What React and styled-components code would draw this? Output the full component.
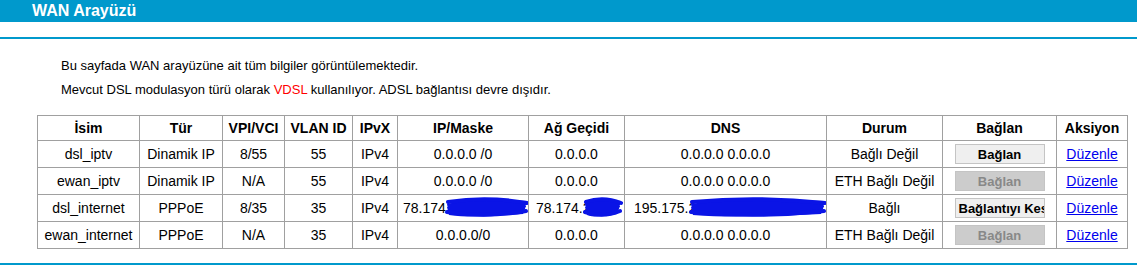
import styled, { createGlobalStyle } from 'styled-components'

const GlobalStyle = createGlobalStyle`
    body {
        margin: 0;
        background: #fff;
        font-family: "Liberation Sans", Arial, sans-serif;
        color: #000;
    }
`

const Page = styled.div`
    width: 1137px;
`

const TitleBar = styled.div`
    height: 22px;
    background: #0099cc;
    padding-left: 32px;
    display: flex;
    align-items: center;

    h1 {
        margin: 0;
        font-size: 16px;
        font-weight: bold;
        color: #fff;
    }
`

const Rule = styled.div`
    height: 2px;
    background: #0099cc;
    margin-top: ${p => p.$top}px;
`

const Intro = styled.div`
    padding-left: 61px;
    margin-top: 15px;
    font-size: 13px;
    line-height: 24px;

    p {
        margin: 0;
    }

    .red {
        color: #ff0000;
    }
`

const Table = styled.table`
    margin: 13px 0 0 37px;
    width: 1091px;
    border-collapse: collapse;
    table-layout: fixed;
    font-size: 14px;

    th, td {
        border: 1px solid #a0a0a0;
        text-align: center;
        padding: 0;
        white-space: nowrap;
    }

    th {
        height: 24px;
        font-weight: bold;
    }

    td {
        height: 26px;
    }
`

const MaskedCell = styled.td`
    position: relative;
    overflow: hidden;
    && {
        text-align: left;
        padding-left: ${p => p.$pad}px;
    }
`

const Scribble = styled.svg`
    position: absolute;
    top: 1px;
    left: ${p => p.$left}px;
`

const Button = styled.button`
    width: 90px;
    height: 20px;
    padding: 0 3px;
    border: 1px solid #c4c4c4;
    background: ${p => (p.disabled ? '#cccccc' : '#efefef')};
    color: ${p => (p.disabled ? '#888' : '#000')};
    font-family: "Liberation Sans", Arial, sans-serif;
    font-size: 13px;
    font-weight: bold;
    white-space: nowrap;
    overflow: hidden;
    vertical-align: middle;
    display: inline-block;
`

const Link = styled.a`
    color: #0000ee;
    text-decoration: underline;
    font-size: 14px;
`

const cols = [102, 83, 62, 68, 45, 131, 96, 202, 116, 114, 71]

function Blob({ left, width }) {
    return (
        <Scribble $left={left} width={width} height={24} viewBox={`0 0 ${width} 24`}>
            <path
                d={`M2 8 C ${width * 0.3} 2, ${width * 0.6} 4, ${width - 2} 5 L ${width - 4} 12 L 3 13 Z M 2 11 L ${width - 3} 10 L ${width - 6} 18 C ${width * 0.6} 20, ${width * 0.3} 22, 4 19 Z`}
                fill="#0a14e6"
            />
            <path
                d={`M3 6 Q ${width / 2} 0 ${width - 2} 7 M 2 16 Q ${width / 2} 22 ${width - 3} 15`}
                stroke="#0a14e6"
                strokeWidth="4"
                fill="none"
                strokeLinecap="round"
            />
        </Scribble>
    )
}

const rows = [
    { name: 'dsl_iptv', type: 'Dinamik IP', vpi: '8/55', vlan: '55', ip: '0.0.0.0 /0', gw: '0.0.0.0', dns: '0.0.0.0 0.0.0.0', state: 'Bağlı Değil', btn: 'Bağlan', off: false },
    { name: 'ewan_iptv', type: 'Dinamik IP', vpi: 'N/A', vlan: '55', ip: '0.0.0.0 /0', gw: '0.0.0.0', dns: '0.0.0.0 0.0.0.0', state: 'ETH Bağlı Değil', btn: 'Bağlan', off: true },
    { name: 'dsl_internet', type: 'PPPoE', vpi: '8/35', vlan: '35', masked: true, state: 'Bağlı', btn: 'Bağlantıyı Kes', off: false },
    { name: 'ewan_internet', type: 'PPPoE', vpi: 'N/A', vlan: '35', ip: '0.0.0.0/0', gw: '0.0.0.0', dns: '0.0.0.0 0.0.0.0', state: 'ETH Bağlı Değil', btn: 'Bağlan', off: true },
]

export default function App() {
    return (
        <Page>
            <GlobalStyle />
            <TitleBar>
                <h1>WAN Arayüzü</h1>
            </TitleBar>
            <Rule $top={15} />
            <Intro>
                <p>Bu sayfada WAN arayüzüne ait tüm bilgiler görüntülemektedir.</p>
                <p>
                    Mevcut DSL modulasyon türü olarak <span className="red">VDSL</span> kullanılıyor. ADSL bağlantısı devre dışıdır.
                </p>
            </Intro>
            <Table>
                <colgroup>
                    {cols.map((w, i) => (
                        <col key={i} style={{ width: w }} />
                    ))}
                </colgroup>
                <thead>
                    <tr>
                        <th>İsim</th>
                        <th>Tür</th>
                        <th>VPI/VCI</th>
                        <th>VLAN ID</th>
                        <th>IPvX</th>
                        <th>IP/Maske</th>
                        <th>Ağ Geçidi</th>
                        <th>DNS</th>
                        <th>Durum</th>
                        <th>Bağlan</th>
                        <th>Aksiyon</th>
                    </tr>
                </thead>
                <tbody>
                    {rows.map(r => (
                        <tr key={r.name}>
                            <td>{r.name}</td>
                            <td>{r.type}</td>
                            <td>{r.vpi}</td>
                            <td>{r.vlan}</td>
                            <td>IPv4</td>
                            {r.masked ? (
                                <>
                                    <MaskedCell $pad={5}>
                                        78.174
                                        <Blob left={47} width={84} />
                                    </MaskedCell>
                                    <MaskedCell $pad={7}>
                                        78.174.2
                                        <Blob left={54} width={40} />
                                    </MaskedCell>
                                    <MaskedCell $pad={9}>
                                        195.175.2
                                        <Blob left={64} width={138} />
                                    </MaskedCell>
                                </>
                            ) : (
                                <>
                                    <td>{r.ip}</td>
                                    <td>{r.gw}</td>
                                    <td>{r.dns}</td>
                                </>
                            )}
                            <td>{r.state}</td>
                            <td>
                                <Button disabled={r.off}>{r.btn}</Button>
                            </td>
                            <td>
                                <Link href="#">Düzenle</Link>
                            </td>
                        </tr>
                    ))}
                </tbody>
            </Table>
            <Rule $top={14} />
        </Page>
    )
}
